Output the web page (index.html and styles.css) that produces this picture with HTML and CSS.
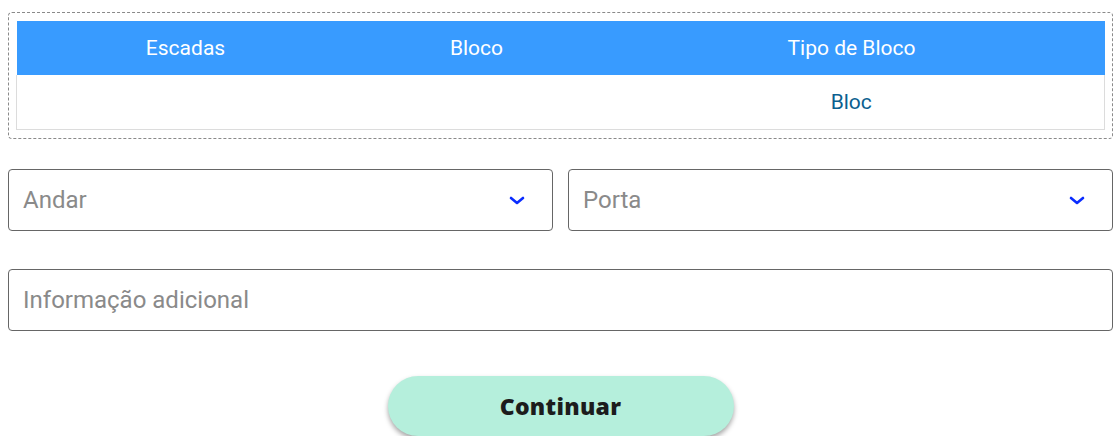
FILE: index.html
```html
<!DOCTYPE html>
<html lang="pt">
<head>
  <meta charset="UTF-8" />
  <meta name="viewport" content="width=device-width, initial-scale=1.0" />
  <title>Morada</title>
  <link rel="stylesheet" href="styles.css">
</head>
<body>

<div class="table-box">
  <table class="blocks">
    <thead>
      <tr>
        <th class="col-stairs">Escadas</th>
        <th class="col-block">Bloco</th>
        <th>Tipo de Bloco</th>
      </tr>
    </thead>
    <tbody>
      <tr>
        <td></td>
        <td></td>
        <td>Bloc</td>
      </tr>
    </tbody>
  </table>
</div>

<div class="row">
  <div class="select">
    <span class="placeholder">Andar</span>
    <svg class="chevron" viewBox="0 0 16 10"><path d="M2 2l6 5 6-5"/></svg>
  </div>
  <div class="select">
    <span class="placeholder">Porta</span>
    <svg class="chevron" viewBox="0 0 16 10"><path d="M2 2l6 5 6-5"/></svg>
  </div>
</div>

<div class="field">
  <span class="placeholder">Informação adicional</span>
</div>

<div class="actions">
  <button type="button" class="btn-continue">Continuar</button>
</div>

</body>
</html>
```

FILE: styles.css
```css
body {
  font-family: Roboto, 'Liberation Sans', sans-serif;
  background: #fff;
  margin: 0;
  padding: 12px 7px 0 8px;
}

.table-box {
  border: 1px dashed #8a8a8a;
  border-radius: 4px;
  padding: 8px 7px 8px 7px;
}

.blocks {
  width: 100%;
  border-collapse: collapse;
  table-layout: fixed;
  font-size: 21px;
}

.blocks th {
  background: #389bff;
  color: #fff;
  font-weight: 400;
  height: 54px;
  padding: 0;
  line-height: 52px;
}

.col-stairs { width: 338px; }
.col-block { width: 244px; }

.blocks td {
  height: 52px;
  padding: 0;
  line-height: 54px;
  text-align: center;
  color: #0b5f8f;
}

.blocks tbody tr {
  border: 1px solid #dcdcdc;
  border-top: none;
}

.row {
  display: flex;
  gap: 15px;
  margin-top: 30px;
}

.select,
.field {
  flex: 1;
  border: 1px solid #666;
  border-radius: 4px;
  display: flex;
  align-items: center;
  padding: 0 27px 0 14px;
  box-sizing: border-box;
  height: 62px;
}

.placeholder {
  flex: 1;
  font-size: 24px;
  color: #8a8a8a;
}

.chevron {
  width: 16px;
  height: 10px;
  margin-top: 2px;
  fill: none;
  stroke: #0a2cff;
  stroke-width: 2.6;
  stroke-linecap: round;
  stroke-linejoin: round;
}

.field {
  margin-top: 38px;
}

.actions {
  display: flex;
  justify-content: center;
  margin-top: 45px;
}

.btn-continue {
  width: 346px;
  height: 60px;
  border: none;
  border-radius: 30px;
  background: #b5efdc;
  color: #1c1c1c;
  font-family: 'Open Sans', sans-serif;
  font-weight: 800;
  font-size: 23px;
  letter-spacing: 0.3px;
  box-shadow: 0 3px 5px rgba(0,0,0,0.35);
  cursor: pointer;
}
```
